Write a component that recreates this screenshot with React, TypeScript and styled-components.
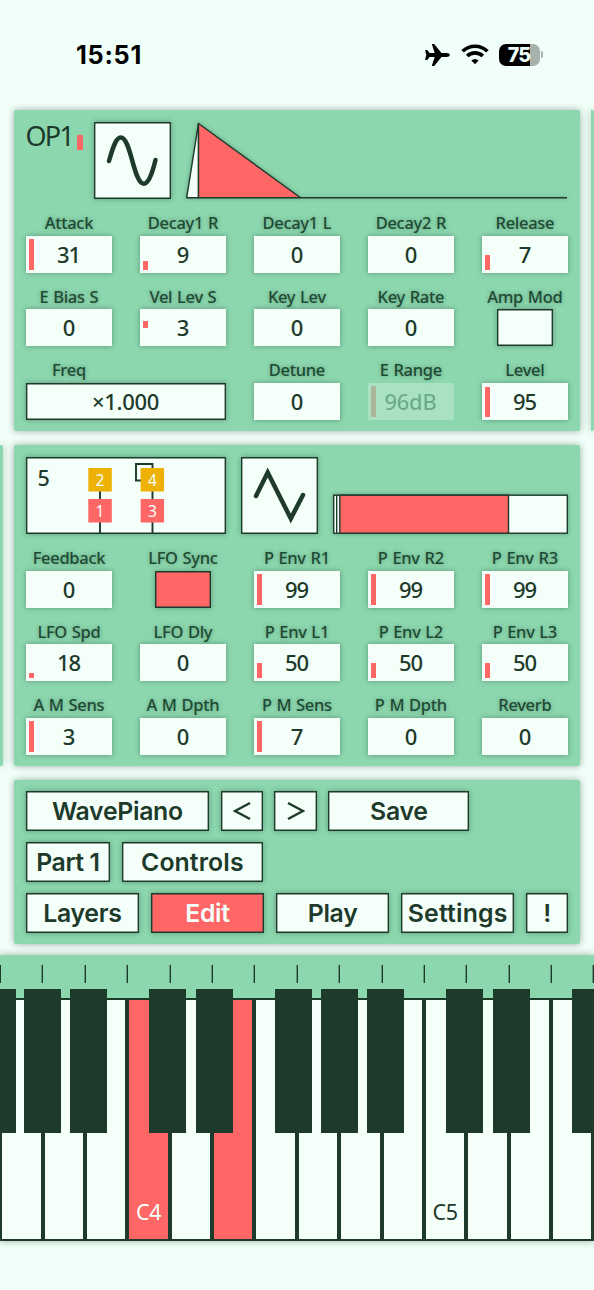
import React from "react";
import styled, { createGlobalStyle, css } from "styled-components";

const c = {
  page: "#f0fff8",
  paper: "#f5fffa",
  panel: "#8cd7ae",
  ink: "#1d3a2b",
  red: "#ff6666",
  amber: "#eeb206",
};

const Global = createGlobalStyle`
  *, *::before, *::after { box-sizing: border-box; }
  html, body { margin: 0; padding: 0; background: ${c.page}; }
  body { width: 594px; height: 1290px; overflow: hidden; }
`;

const outlined = css`
  box-shadow: inset 0 0 0 1.4px ${c.ink}, 0 0 5px rgba(20, 50, 35, 0.4);
`;

const Screen = styled.main`
  width: 594px;
  height: 1290px;
  overflow: hidden;
  display: flex;
  flex-direction: column;
  color: ${c.ink};
  background: ${c.page};
  font-family: "Noto Sans", sans-serif;
`;

const StatusBar = styled.header`
  height: 110px;
  flex: none;
  display: flex;
  justify-content: space-between;
  align-items: flex-start;
  padding: 39px 51px 0 76px;
  color: #000;
  font-family: Inter, sans-serif;
`;

const Clock = styled.time`
  font-size: 25.2px;
  font-weight: 700;
  line-height: 33px;
  letter-spacing: 0.75px;
`;

const StatusIcons = styled.div`
  display: flex;
  padding-top: 4px;
  svg { display: block; }
`;

const Battery = styled.div`
  display: flex;
  align-items: center;
  margin-left: 10px;
`;

const Cell = styled.div`
  width: 41px;
  height: 22px;
  border-radius: 7px;
  background: linear-gradient(90deg, #000 31px, #a6b3ad 31px);
  color: ${c.page};
  font-size: 19.7px;
  font-weight: 800;
  line-height: 22px;
  letter-spacing: -0.9px;
  text-align: center;
`;

const Nub = styled.i`
  width: 2.5px;
  height: 7px;
  margin-left: 1px;
  border-radius: 0 3px 3px 0;
  background: #a6b3ad;
`;

const Pager = styled.div<{ $before?: boolean }>`
  display: flex;
  flex: none;
  gap: 11px;
  margin-bottom: 13.7px;
  padding-left: ${(p) => (p.$before ? 0 : 14)}px;
`;

const Panel = styled.section`
  flex: none;
  width: 566px;
  padding: 12px 11px 11.5px 11.6px;
  border-radius: 2px;
  background: ${c.panel};
  box-shadow: 0 0 7px rgba(20, 40, 30, 0.38);
`;

const Sliver = styled.div`
  flex: none;
  width: 3px;
  border-radius: 0 2px 2px 0;
  background: ${c.panel};
  box-shadow: 0 0 7px rgba(20, 40, 30, 0.38);
`;

const Visuals = styled.div`
  display: flex;
  height: 77.2px;
  svg { display: block; }
`;

const OperatorName = styled.div`
  display: flex;
  width: 68px;
  font-size: 27px;
  line-height: 28px;
  letter-spacing: -1.9px;
`;

const LevelMark = styled.i`
  width: 6px;
  height: 15px;
  margin: 13px 0 0 4px;
  background: ${c.red};
`;

const WaveBox = styled.div`
  width: 77px;
  height: 77px;
  background: ${c.paper};
  ${outlined}
`;

const Graph = styled.svg`
  overflow: visible;
  filter: drop-shadow(0 0 2px rgba(20, 50, 35, 0.35));
`;

const Algorithm = styled.div`
  width: 200.6px;
  height: 77px;
  margin-right: 14.4px;
  background: ${c.paper};
  ${outlined}
`;

const Fields = styled.div`
  display: grid;
  grid-template-columns: repeat(5, 86.9px);
  column-gap: 27.1px;
  grid-auto-rows: 73.5px;
`;

const Field = styled.div<{ $span?: boolean }>`
  grid-column: span ${(p) => (p.$span ? 2 : 1)};
  display: flex;
  flex-direction: column;
`;

const Label = styled.label`
  width: 86.6px;
  height: 36.5px;
  padding-top: 11px;
  font-size: 16.5px;
  font-weight: 500;
  line-height: 25px;
  letter-spacing: -0.3px;
  word-spacing: 0.8px;
  text-align: center;
  white-space: nowrap;
  color: #1e4a34;
  text-shadow: 0 0 4px rgba(20, 60, 40, 0.4);
`;

const ValueBox = styled.div<{ $framed?: boolean; $dim?: boolean }>`
  position: relative;
  height: 37px;
  padding-right: 1px;
  font-size: 22px;
  font-weight: 500;
  line-height: 37px;
  letter-spacing: ${(p) => (p.$framed || p.$dim ? -0.3 : -1.1)}px;
  text-align: center;
  background: ${c.paper};
  box-shadow: 0 0 5px rgba(20, 50, 35, 0.4);
  ${(p) => p.$framed && outlined}
  ${(p) => p.$dim && css`opacity: 0.28; box-shadow: none;`}
`;

const Gauge = styled.i<{ $h: number; $lift?: number }>`
  position: absolute;
  left: 3px;
  bottom: ${(p) => 3 + (p.$lift ?? 0)}px;
  width: 5.5px;
  height: ${(p) => p.$h}px;
  background: ${c.red};
`;

const Toggle = styled.div<{ $on?: boolean }>`
  width: 56.4px;
  height: 37px;
  margin-left: 15px;
  background: ${(p) => (p.$on ? c.red : c.paper)};
  ${outlined}
`;

const Actions = styled(Panel)`
  display: flex;
  flex-direction: column;
  gap: 11.5px;
  height: 164px;
  padding-top: 11.4px;
`;

const ButtonRow = styled.div`
  display: flex;
  gap: 11.5px;
`;

const Button = styled.button<{ $w: number; $active?: boolean; $track?: number }>`
  width: ${(p) => p.$w}px;
  height: 39.5px;
  flex: none;
  padding: 0;
  border: 0;
  font: 560 24.8px/40px Inter, sans-serif;
  letter-spacing: ${(p) => p.$track ?? -0.3}px;
  white-space: nowrap;
  color: ${(p) => (p.$active ? c.paper : c.ink)};
  background: ${(p) => (p.$active ? c.red : c.paper)};
  ${outlined}
  svg { display: block; margin: auto; }
`;

const Keyboard = styled.section`
  position: relative;
  flex: none;
  width: 594px;
  height: 286px;
  margin-top: -2.5px;
  overflow: visible;
  background: ${c.panel};
  box-shadow: 0 0 7px rgba(20, 40, 30, 0.38);
`;

const Ticks = styled.div`
  display: flex;
  height: 43px;
  padding-top: 10px;
  overflow: hidden;
`;

const Tick = styled.i`
  flex: none;
  width: 42.4px;
  height: 18px;
  border-left: 1px solid ${c.ink};
  box-shadow: -0.4px 0 0 ${c.ink};
`;

const WhiteKeys = styled.div`
  display: flex;
  height: 243px;
  padding: 2px 0;
  overflow: hidden;
  background: ${c.ink};
`;

const WhiteKey = styled.div<{ $held?: boolean }>`
  flex: none;
  display: flex;
  align-items: flex-end;
  justify-content: center;
  width: 38.4px;
  margin: 0 1.8px 0 2.2px;
  padding-bottom: 13px;
  font-size: 21.5px;
  line-height: 28px;
  letter-spacing: -0.4px;
  color: ${(p) => (p.$held ? c.paper : c.ink)};
  background: ${(p) => (p.$held ? c.red : c.paper)};
`;

const BlackKey = styled.div`
  position: absolute;
  top: 34px;
  width: 37px;
  height: 144px;
  background: ${c.ink};
`;

type FieldSpec = {
  label: string;
  value?: string;
  gauge?: number;
  lift?: number;
  wide?: boolean;
  dim?: boolean;
  toggle?: "on" | "off";
};

const operatorFields: FieldSpec[] = [
  { label: "Attack", value: "31", gauge: 31 },
  { label: "Decay1 R", value: "9", gauge: 9 },
  { label: "Decay1 L", value: "0" },
  { label: "Decay2 R", value: "0" },
  { label: "Release", value: "7", gauge: 15 },
  { label: "E Bias S", value: "0" },
  { label: "Vel Lev S", value: "3", gauge: 7, lift: 15 },
  { label: "Key Lev", value: "0" },
  { label: "Key Rate", value: "0" },
  { label: "Amp Mod", toggle: "off" },
  { label: "Freq", value: "×1.000", wide: true },
  { label: "Detune", value: "0" },
  { label: "E Range", value: "96dB", gauge: 31, dim: true },
  { label: "Level", value: "95", gauge: 30 },
];

const voiceFields: FieldSpec[] = [
  { label: "Feedback", value: "0" },
  { label: "LFO Sync", toggle: "on" },
  { label: "P Env R1", value: "99", gauge: 31 },
  { label: "P Env R2", value: "99", gauge: 31 },
  { label: "P Env R3", value: "99", gauge: 31 },
  { label: "LFO Spd", value: "18", gauge: 5 },
  { label: "LFO Dly", value: "0" },
  { label: "P Env L1", value: "50", gauge: 15 },
  { label: "P Env L2", value: "50", gauge: 15 },
  { label: "P Env L3", value: "50", gauge: 15 },
  { label: "A M Sens", value: "3", gauge: 31 },
  { label: "A M Dpth", value: "0" },
  { label: "P M Sens", value: "7", gauge: 31 },
  { label: "P M Dpth", value: "0" },
  { label: "Reverb", value: "0" },
];

const blackKeys = [-21, 24.4, 70, 149, 196, 275.4, 321, 367, 446, 493, 572];

function FieldGrid({ items }: { items: FieldSpec[] }) {
  return (
    <Fields>
      {items.map((f) => (
        <Field key={f.label} $span={f.wide}>
          <Label>{f.label}</Label>
          {f.toggle ? (
            <Toggle $on={f.toggle === "on"} />
          ) : (
            <ValueBox $framed={f.wide} $dim={f.dim}>
              {f.gauge && <Gauge $h={f.gauge} $lift={f.lift} />}
              {f.value}
            </ValueBox>
          )}
        </Field>
      ))}
    </Fields>
  );
}

function Operator({ x, y, n, color }: { x: number; y: number; n: number; color: string }) {
  return (
    <g>
      <rect x={x} y={y} width="23.5" height="23.5" fill={color} />
      <text x={x + 11.75} y={y + 17.6} textAnchor="middle" fontSize="15.5" fill={c.paper}>
        {n}
      </text>
    </g>
  );
}

export default function App() {
  return (
    <Screen>
      <Global />
      <StatusBar>
        <Clock>15:51</Clock>
        <StatusIcons>
          <svg width="25" height="23" viewBox="0 0 25 23">
            <path
              d="M24.8 12c0-1.200-1.500-2-3.300-2h-5L9.600 1.500C9.300 1.100 9 1 8.500 1H7.300c-.4 0-.5.3-.4.6L9.700 10H4.600L2.500 7.300C2.300 7 2.100 6.900 1.800 6.900H.6c-.3 0-.5.3-.4.6L1.300 12 .2 16.500c-.1.300.1.600.4.600h1.200c.3 0 .5-.1.700-.4L4.600 14h5.100l-2.800 8.400c-.1.300 0 .6.400.600h1.200c.5 0 .8-.1 1.100-.5L16.500 14h5c1.800 0 3.300-.8 3.300-2z"
              fill="#000"
            />
          </svg>
          <svg width="28" height="22" viewBox="0 0 28 22" style={{ marginLeft: 11 }}>
            <g fill="none" stroke="#000" strokeWidth="3.700">
              <path d="M1.600 8.300a17.700 17.700 0 0 1 24.800 0" />
              <path d="M6.200 13a11.200 11.200 0 0 1 15.600 0" />
            </g>
            <path d="M14 21.300l-3.700-3.900a5.300 5.300 0 0 1 7.400 0z" fill="#000" />
          </svg>
          <Battery>
            <Cell>75</Cell>
            <Nub />
          </Battery>
        </StatusIcons>
      </StatusBar>

      <Pager>
        <Panel>
          <Visuals>
            <OperatorName>
              OP1
              <LevelMark />
            </OperatorName>
            <WaveBox>
              <svg width="77" height="77" viewBox="0 0 77 77">
                <path
                  d="M15 39C19 25 22 15.500 26.800 15.500C37 15.500 39.500 61.700 49.700 61.700C54.500 61.700 58 52 61.500 38"
                  fill="none"
                  stroke={c.ink}
                  strokeWidth="4.500"
                  strokeLinecap="round"
                />
              </svg>
            </WaveBox>
            <Graph width="382" height="77" viewBox="0 0 382 77" style={{ marginLeft: 15 }}>
              <g stroke={c.ink} strokeWidth="1.400" strokeLinejoin="round">
                <path d="M.7 75.700L12.500 1.500V75.700z" fill={c.paper} />
                <path d="M12.500 75.700V1.500L114.500 75.700z" fill={c.red} />
                <path d="M114 75.700H381" />
              </g>
            </Graph>
          </Visuals>
          <FieldGrid items={operatorFields} />
        </Panel>
        <Sliver />
      </Pager>

      <Pager $before>
        <Sliver />
        <Panel>
          <Visuals>
            <Algorithm>
              <svg width="200" height="77" viewBox="0 0 200 77">
                <g fill="none" stroke={c.ink} strokeWidth="1.900">
                  <path d="M74 20V76" />
                  <path d="M126.500 76V7H110v16.500H120" />
                </g>
                <text x="11.500" y="28.500" fontSize="21.500" fontWeight="500" fill={c.ink}>5</text>
                <Operator x={62.3} y={11} n={2} color={c.amber} />
                <Operator x={62.3} y={42} n={1} color={c.red} />
                <Operator x={114.6} y={11} n={4} color={c.amber} />
                <Operator x={114.6} y={42} n={3} color={c.red} />
              </svg>
            </Algorithm>
            <WaveBox>
              <svg width="77" height="77" viewBox="0 0 77 77">
                <path
                  d="M15 39L26.700 15.500L49.800 61.500L62 38"
                  fill="none"
                  stroke={c.ink}
                  strokeWidth="4.500"
                  strokeLinecap="round"
                />
              </svg>
            </WaveBox>
            <Graph width="235" height="77" viewBox="0 0 235 77" style={{ marginLeft: 15 }}>
              <g stroke={c.ink} strokeWidth="1.400">
                <rect x=".7" y="38.200" width="233.600" height="38" fill={c.paper} />
                <rect x="6.800" y="38.200" width="168.700" height="38" fill={c.red} />
                <path d="M3.700 38V76" />
              </g>
            </Graph>
          </Visuals>
          <FieldGrid items={voiceFields} />
        </Panel>
      </Pager>

      <Pager>
        <Actions>
          <ButtonRow>
            <Button $w={183.5}>WavePiano</Button>
            <Button $w={42.3}>
              <svg width="18" height="20" viewBox="0 0 18 20">
                <path d="M17 2L2 10l15 8" fill="none" stroke={c.ink} strokeWidth="2.500" />
              </svg>
            </Button>
            <Button $w={42.3}>
              <svg width="18" height="20" viewBox="0 0 18 20">
                <path d="M1 2l15 8L1 18" fill="none" stroke={c.ink} strokeWidth="2.500" />
              </svg>
            </Button>
            <Button $w={141.3}>Save</Button>
          </ButtonRow>
          <ButtonRow>
            <Button $w={84.6} $track={-0.4}>Part 1</Button>
            <Button $w={141.3} $track={0.1}>Controls</Button>
          </ButtonRow>
          <ButtonRow>
            <Button $w={113.6}>Layers</Button>
            <Button $w={113.6} $active>Edit</Button>
            <Button $w={113.6}>Play</Button>
            <Button $w={113.6} $track={0.2}>Settings</Button>
            <Button $w={42.3}>!</Button>
          </ButtonRow>
        </Actions>
      </Pager>

      <Keyboard>
        <Ticks>
          {Array.from({ length: 15 }, (_, i) => (
            <Tick key={i} />
          ))}
        </Ticks>
        <WhiteKeys>
          {Array.from({ length: 15 }, (_, i) => (
            <WhiteKey key={i} $held={i === 3 || i === 5}>
              {i === 3 ? "C4" : i === 10 ? "C5" : null}
            </WhiteKey>
          ))}
        </WhiteKeys>
        {blackKeys.map((x) => (
          <BlackKey key={x} style={{ left: x }} />
        ))}
      </Keyboard>
    </Screen>
  );
}
